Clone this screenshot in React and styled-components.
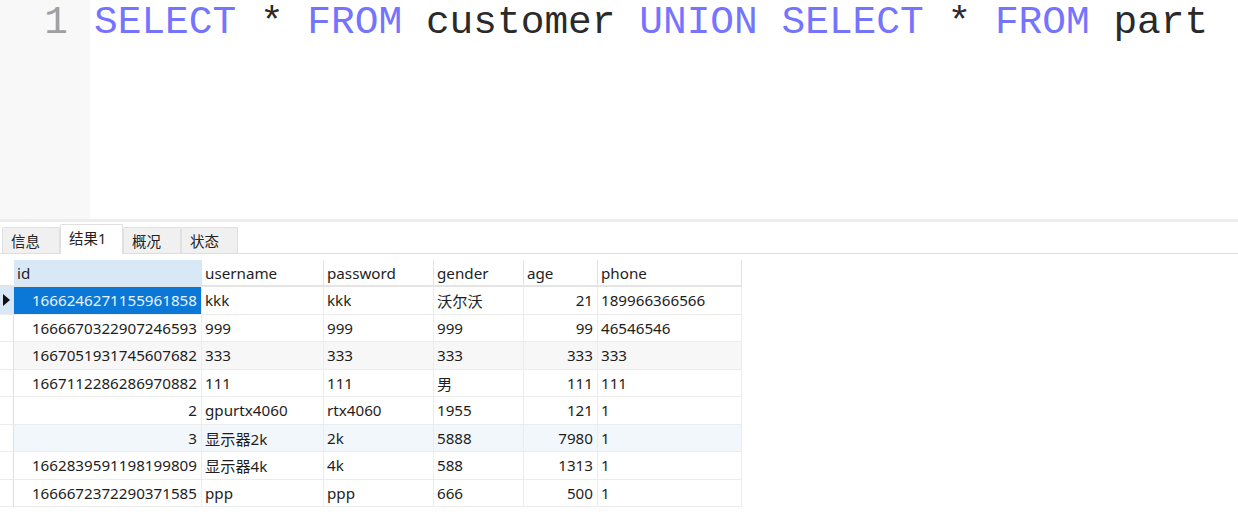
import styled, { createGlobalStyle } from "styled-components";

const GlobalStyle = createGlobalStyle`
	html, body {
		margin: 0;
		padding: 0;
		background: #ffffff;
	}
	body {
		font-family: "Noto Sans", "Noto Sans CJK SC", sans-serif;
	}
`;

const Page = styled.div`
	width: 1238px;
	height: 527px;
	overflow: hidden;
	display: flex;
	flex-direction: column;
	background: #fff;
`;

const Editor = styled.div`
	height: 219px;
	display: flex;
	flex-shrink: 0;
`;

const Gutter = styled.div`
	width: 90px;
	background: #f8f8f8;
	box-sizing: border-box;
	padding-right: 22px;
	text-align: right;
	font-family: "Liberation Mono", monospace;
	font-size: 39.5px;
	line-height: 46px;
	color: #a0a0a0;
`;

const Code = styled.div`
	padding-left: 4px;
	font-family: "Liberation Mono", monospace;
	font-size: 39.5px;
	line-height: 46px;
	color: #2a2a2a;
	white-space: pre;
`;

const Keyword = styled.span`
	color: #7474ff;
`;

const Divider = styled.div`
	height: 3px;
	background: #ededed;
	flex-shrink: 0;
`;

const TabBar = styled.div`
	display: flex;
	align-items: flex-end;
	height: 31px;
	padding-left: 2px;
	border-bottom: 1px solid #dedede;
	flex-shrink: 0;
`;

const Tab = styled.div`
	height: ${(p) => (p.$active ? "30px" : "26px")};
	width: ${(p) => p.$w}px;
	box-sizing: border-box;
	display: flex;
	align-items: center;
	padding-left: 8px;
	font-size: 14.5px;
	color: #222;
	background: ${(p) => (p.$active ? "#ffffff" : "#f0f0f0")};
	border: 1px solid #e0e0e0;
	border-bottom: none;
	border-radius: 2px 2px 0 0;
	margin-bottom: ${(p) => (p.$active ? "-1px" : "0")};
	${(p) => p.$active && "padding-bottom: 5px;"}
`;

const Grid = styled.div`
	margin-top: 6px;
	display: grid;
	grid-template-columns: 14px 188px 122px 110px 90px 74px 144px;
	width: 742px;
	font-size: 15.2px;
	color: #1e1e1e;
`;

const Cell = styled.div`
	height: ${(p) => (p.$head ? "27px" : "27.5px")};
	box-sizing: border-box;
	display: flex;
	align-items: center;
	justify-content: ${(p) => (p.$right ? "flex-end" : "flex-start")};
	padding: 0 4px 0 3px;
	border-right: 1px solid #ececec;
	border-bottom: 1px solid #ececec;
	white-space: nowrap;
	background: ${(p) => p.$bg || "transparent"};
	color: ${(p) => p.$fg || "inherit"};
	${(p) => p.$head && "border-right-color: #e2e2e2; border-bottom: 2px solid #e4e4e4;"}
`;

const Corner = styled(Cell)`
	border-right: none;
	padding: 0;
`;

const Marker = styled.div`
	height: 27.5px;
	box-sizing: border-box;
	border-right: 1px solid #e0e0e0;
	border-bottom: 1px solid #ececec;
	display: flex;
	align-items: center;
	justify-content: center;
	background: ${(p) => (p.$sel ? "#d9e8f7" : "#fff")};
`;

const Arrow = styled.div`
	width: 0;
	height: 0;
	border-top: 6px solid transparent;
	border-bottom: 6px solid transparent;
	border-left: 7px solid #111;
`;

const columns = ["id", "username", "password", "gender", "age", "phone"];

const rows = [
	["1666246271155961858", "kkk", "kkk", "沃尔沃", "21", "189966366566"],
	["1666670322907246593", "999", "999", "999", "99", "46546546"],
	["1667051931745607682", "333", "333", "333", "333", "333"],
	["1667112286286970882", "111", "111", "男", "111", "111"],
	["2", "gpurtx4060", "rtx4060", "1955", "121", "1"],
	["3", "显示器2k", "2k", "5888", "7980", "1"],
	["1662839591198199809", "显示器4k", "4k", "588", "1313", "1"],
	["1666672372290371585", "ppp", "ppp", "666", "500", "1"],
];

const rowBg = (i) => {
	if (i === 2) return "#f7f7f7";
	if (i === 5) return "#f2f7fc";
	return "#fff";
};

const tabs = [
	{ label: "信息", w: 58 },
	{ label: "结果1", w: 63, active: true },
	{ label: "概况", w: 58 },
	{ label: "状态", w: 57 },
];

const App = () => {
	return (
		<Page>
			<GlobalStyle />
			<Editor>
				<Gutter>1</Gutter>
				<Code>
					<Keyword>SELECT</Keyword> * <Keyword>FROM</Keyword> customer{" "}
					<Keyword>UNION</Keyword> <Keyword>SELECT</Keyword> *{" "}
					<Keyword>FROM</Keyword> part
				</Code>
			</Editor>
			<Divider />
			<TabBar>
				{tabs.map((t) => (
					<Tab key={t.label} $w={t.w} $active={t.active}>
						{t.label}
					</Tab>
				))}
			</TabBar>
			<Grid>
				<Corner $head />
				{columns.map((c, i) => (
					<Cell key={c} $head $bg={i === 0 ? "#d9e8f7" : "#fff"}>
						{c}
					</Cell>
				))}
				{rows.map((r, ri) => [
					<Marker key={"m" + ri} $sel={ri === 0}>
						{ri === 0 && <Arrow />}
					</Marker>,
					...r.map((v, ci) => {
						const selected = ri === 0 && ci === 0;
						return (
							<Cell
								key={ri + "-" + ci}
								$right={ci === 0 || ci === 4}
								$bg={selected ? "#0b78d7" : rowBg(ri)}
								$fg={selected ? "#e8f2fc" : undefined}
							>
								{v}
							</Cell>
						);
					}),
				])}
			</Grid>
		</Page>
	);
};

export default App;
